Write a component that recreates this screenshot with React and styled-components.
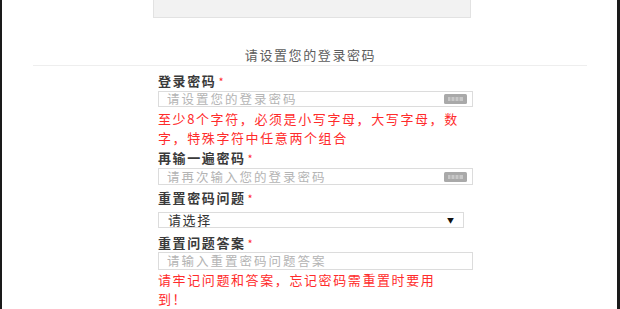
import styled, { createGlobalStyle } from "styled-components";

const GlobalStyle = createGlobalStyle`
	html, body {
		margin: 0;
		padding: 0;
		background: #fff;
	}
	body {
		font-family: "Noto Sans CJK SC", "Noto Sans", sans-serif;
	}
`;

const Frame = styled.div`
	box-sizing: border-box;
	width: 620px;
	height: 309px;
	border-left: 2px solid #1a1a1a;
	border-right: 3px solid #1a1a1a;
	background: #fff;
	overflow: hidden;
	display: flex;
	flex-direction: column;
`;

const TopBox = styled.div`
	box-sizing: border-box;
	width: 318px;
	height: 18px;
	margin-left: 151px;
	background: #f2f2f2;
	border: 1px solid #e2e2e2;
	border-top: none;
`;

const Title = styled.div`
	margin-top: 29px;
	font-size: 13px;
	line-height: 16px;
	letter-spacing: 1.6px;
	color: #5c5c5c;
	text-align: center;
	padding-left: 2px;
`;

const Divider = styled.div`
	height: 1px;
	background: #eeeeee;
	margin: 2px 30px 0 31px;
`;

const Form = styled.div`
	display: flex;
	flex-direction: column;
	margin-left: 156px;
	width: 315px;
`;

const Label = styled.div`
	margin-top: ${(p) => p.$top}px;
	font-size: 13px;
	line-height: 16px;
	font-weight: bold;
	letter-spacing: 1.6px;
	color: #3a3a3a;
`;

const Star = styled.span`
	color: #ff2b2b;
	font-weight: normal;
	font-size: 11px;
	letter-spacing: 0;
	margin-left: 2px;
`;

const InputBox = styled.div`
	box-sizing: border-box;
	display: flex;
	align-items: center;
	width: 315px;
	height: ${(p) => p.$h}px;
	margin-top: ${(p) => p.$top}px;
	border: 1px solid #dcdcdc;
	background: #fff;
	padding: 0 5px 0 8px;
	overflow: hidden;
`;

const Field = styled.input`
	all: unset;
	flex: 1;
	min-width: 0;
	height: 14px;
	line-height: 14px;
	font-family: "Noto Sans CJK SC", "Noto Sans", sans-serif;
	font-size: 12.5px;
	letter-spacing: 2px;
	color: #333;
	&::placeholder {
		color: #b4b4b4;
	}
`;

const KeyIcon = styled.svg`
	flex: none;
	width: 23px;
	height: 10px;
`;

const SelectBox = styled.div`
	box-sizing: border-box;
	display: flex;
	align-items: center;
	justify-content: space-between;
	width: 306px;
	height: 16px;
	margin-top: ${(p) => p.$top}px;
	border: 1px solid #dcdcdc;
	padding: 0 9px 0 9px;
	font-size: 13px;
	line-height: 14px;
	letter-spacing: 1.6px;
	color: #333;
`;

const Arrow = styled.span`
	font-size: 7px;
	letter-spacing: 0;
	color: #111;
`;

const Hint = styled.div`
	margin-top: ${(p) => p.$top}px;
	font-size: 13px;
	line-height: 19px;
	letter-spacing: 1.6px;
	color: #ff2b2b;
`;

function Keyboard() {
	return (
		<KeyIcon viewBox="0 0 23 10">
			<rect x="0" y="0" width="23" height="10" rx="1.5" fill="#a9a9a9" />
			<rect x="4" y="3" width="15" height="4" fill="#c8c8c8" />
			<path d="M7 3v4M11 3v4M15 3v4" stroke="#a9a9a9" strokeWidth="1" />
		</KeyIcon>
	);
}

function PasswordInput({ placeholder, top, h }) {
	return (
		<InputBox $top={top} $h={h}>
			<Field type="password" placeholder={placeholder} />
			<Keyboard />
		</InputBox>
	);
}

export default function App() {
	return (
		<>
			<GlobalStyle />
			<Frame>
				<TopBox />
				<Title>请设置您的登录密码</Title>
				<Divider />
				<Form>
					<Label $top={7}>
						登录密码<Star>*</Star>
					</Label>
					<PasswordInput placeholder="请设置您的登录密码" top={2} h={16} />
					<Hint $top={2}>
						至少8个字符，必须是小写字母，大写字母，数字，特殊字符中任意两个组合
					</Hint>
					<Label $top={3}>
						再输一遍密码<Star>*</Star>
					</Label>
					<PasswordInput placeholder="请再次输入您的登录密码" top={2} h={17} />
					<Label $top={5}>
						重置密码问题<Star>*</Star>
					</Label>
					<SelectBox $top={6}>
						<span>请选择</span>
						<Arrow>▼</Arrow>
					</SelectBox>
					<Label $top={7}>
						重置问题答案<Star>*</Star>
					</Label>
					<InputBox $top={1} $h={18}>
						<Field type="text" placeholder="请输入重置密码问题答案" />
					</InputBox>
					<Hint $top={0}>
						请牢记问题和答案，忘记密码需重置时要用
						<br />
						到！
					</Hint>
				</Form>
			</Frame>
		</>
	);
}
